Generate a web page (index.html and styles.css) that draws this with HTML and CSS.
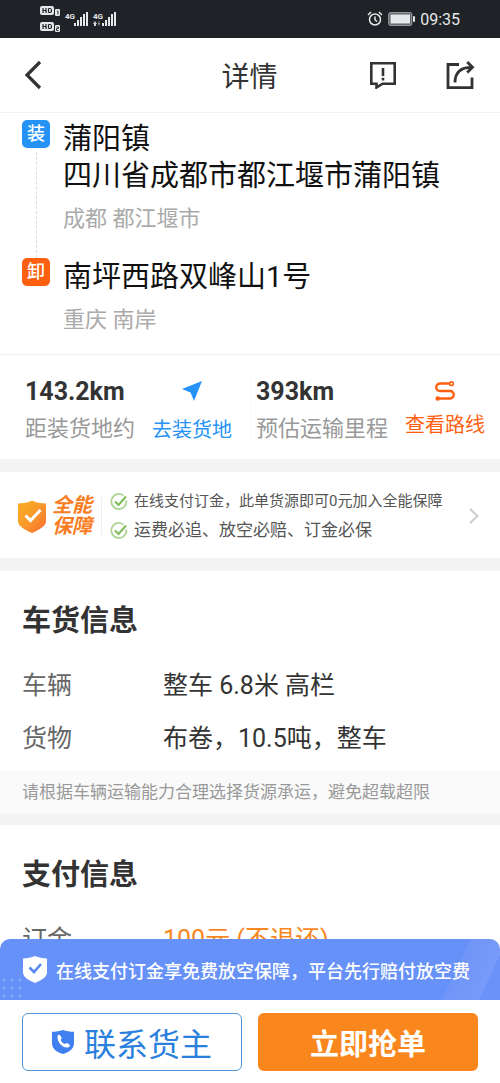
FILE: index.html
```html
<!DOCTYPE html>
<html lang="zh-CN">
<head>
<meta charset="utf-8">
<meta name="viewport" content="width=device-width, initial-scale=1">
<title>详情</title>
<link rel="stylesheet" href="styles.css">
</head>
<body>
<div class="app">
  <div class="status">
    <svg class="status-left" width="80" height="28" viewBox="0 0 80 28" aria-hidden="true">
      <g fill="#e6e7e8">
        <rect x="0" y="1" width="14" height="9" rx="2"/>
        <rect x="0" y="17" width="14" height="9" rx="2"/>
        <rect x="15" y="4" width="5" height="7" rx="1"/>
        <rect x="15" y="20" width="5" height="7" rx="1"/>
        <rect x="34" y="18" width="2" height="3"/><rect x="37" y="15" width="2" height="6"/><rect x="40" y="12" width="2" height="9"/><rect x="43" y="9" width="2" height="12"/><rect x="46" y="7" width="2" height="14"/>
        <rect x="62" y="18" width="2" height="3"/><rect x="65" y="15" width="2" height="6"/><rect x="68" y="12" width="2" height="9"/><rect x="71" y="9" width="2" height="12"/><rect x="74" y="7" width="2" height="14"/>
        <path d="M55 16l2 3h-1v2h-2v-2h-1z" opacity=".9"/><path d="M59 21l-1.500-3h1v-2h1v2h1z" opacity=".5"/>
      </g>
      <path d="M3 3v5M3 5.500h3M6 3v5M8.500 3.500v4M8.500 3.500h1.500q1.500 0 1.500 2t-1.500 2h-1.500M3 19v5M3 21.500h3M6 19v5M8.500 19.500v4M8.500 19.500h1.500q1.500 0 1.500 2t-1.500 2h-1.500" fill="none" stroke="#1f2327" stroke-width="1.200"/>
      <path d="M17 6h1v3.500M16.500 22h2v1.500h-2v2h2" fill="none" stroke="#1f2327" stroke-width=".9"/>
      <text class="net" x="25" y="14">4G</text>
      <text class="net" x="53" y="14">4G</text>
    </svg>
    <div class="status-right">
      <svg width="16" height="16" viewBox="0 0 16 16" fill="none" stroke="#e6e7e8" stroke-width="1.500" aria-hidden="true"><circle cx="8" cy="8.500" r="5.500"/><path d="M8 5.500v3.200l2 1.800M1 4l3-3M15 4l-3-3"/></svg>
      <svg width="27" height="14" viewBox="0 0 27 14" aria-hidden="true"><rect x=".7" y=".7" width="23" height="12.600" rx="2" fill="#5d6063" stroke="#95979a" stroke-width="1.200"/><rect x="2.500" y="2.500" width="19.500" height="9" fill="#e6e7e8"/><rect x="25" y="4" width="2" height="6" rx="1" fill="#e6e7e8"/></svg>
      <span>09:35</span>
    </div>
  </div>

  <header class="header">
    <button class="icon-btn" aria-label="返回"><svg width="18" height="30" viewBox="0 0 18 30" fill="none" stroke="#333" stroke-width="3.200"><path d="M16 2L3 15l13 13"/></svg></button>
    <h1 class="title">详情</h1>
    <div class="header-actions">
      <button class="icon-btn" aria-label="投诉"><svg width="28" height="28" viewBox="0 0 28 28" fill="none" stroke="#333" stroke-width="2.600"><path d="M2.300 2.300h23.400v20.400H13.500L7.500 26.500v-3.800H2.300z"/><path d="M14 7v8M14 16.800v2.600"/></svg></button>
      <button class="icon-btn" aria-label="分享"><svg width="30" height="30" viewBox="0 0 30 30" fill="none" stroke="#333" stroke-width="2.800"><path d="M14 4.500H3v23.200h24V17.500"/><path d="M10 22.500C10 12 15.500 7.300 26.500 7.300M22.200 2l5.300 5.300-5.300 5.300"/></svg></button>
    </div>
  </header>

  <main class="content">
    <section class="route">
      <div class="stop">
        <div class="rail"><span class="tag tag-load">装</span><span class="dash"></span></div>
        <div class="place"><p class="address">蒲阳镇<br>四川省成都市都江堰市蒲阳镇</p><p class="region">成都 都江堰市</p></div>
      </div>
      <div class="stop">
        <div class="rail"><span class="tag tag-unload">卸</span></div>
        <div class="place"><p class="address">南坪西路双峰山1号</p><p class="region">重庆 南岸</p></div>
      </div>
    </section>

    <section class="distances">
      <div class="distance">
        <div class="measure"><strong>143.2km</strong><span>距装货地约</span></div>
        <a class="go go-load" href="#load"><svg width="20" height="20" viewBox="0 0 20 20" aria-hidden="true"><path d="M20 0L12 20l-3.500-8.500L0 8z" fill="#2593f5"/></svg>去装货地</a>
      </div>
      <div class="distance">
        <div class="measure"><strong>393km</strong><span>预估运输里程</span></div>
        <a class="go go-route" href="#route"><svg width="20" height="20" viewBox="0 0 20 20" fill="none" stroke="#ff6010" stroke-width="2.400" aria-hidden="true"><path d="M14.500 2.500H5a3.500 3.500 0 0 0 0 7.500h10a3.500 3.500 0 0 1 0 7.500H4"/><circle cx="16.500" cy="2.700" r="1.800" stroke-width="1.600"/><circle cx="2.700" cy="17.500" r="2.300" fill="#ff6010" stroke="none"/></svg>查看路线</a>
      </div>
    </section>

    <a class="guarantee" href="#guarantee">
      <svg width="28" height="33" viewBox="0 0 28 33" aria-hidden="true"><defs><linearGradient id="gold" x1="0" y1="0" x2="1" y2="1"><stop offset="0" stop-color="#f7ae22"/><stop offset=".5" stop-color="#f99a2b"/><stop offset="1" stop-color="#fb6a30"/></linearGradient></defs><path d="M14 .5C18 2.800 23 3.500 28 3.500V21c0 5-6 8.500-14 12C6 29.500 0 26 0 21V3.500C5 3.500 10 2.800 14 .5z" fill="url(#gold)"/><path d="M7.500 15.500l5 5 10-10.500" fill="none" stroke="#fff" stroke-width="3"/></svg>
      <span class="brand"><span>全能</span><span>保障</span></span>
      <span class="perks">
        <span class="perk"><svg width="18" height="18" viewBox="0 0 18 18" fill="none" aria-hidden="true"><path d="M13.500 2.600A7.500 7.500 0 1 0 16.300 7.500" stroke="#add594" stroke-width="1.800"/><path d="M5 8.500l3.500 3.500 7.500-8.500" stroke="#7dbb56" stroke-width="2"/></svg><span>在线支付订金，此单货源即可0元加入全能保障</span></span>
        <span class="perk perk-short"><svg width="18" height="18" viewBox="0 0 18 18" fill="none" aria-hidden="true"><path d="M13.500 2.600A7.500 7.500 0 1 0 16.300 7.500" stroke="#add594" stroke-width="1.800"/><path d="M5 8.500l3.500 3.500 7.500-8.500" stroke="#7dbb56" stroke-width="2"/></svg><span>运费必追、放空必赔、订金必保</span></span>
      </span>
      <svg class="more" width="10" height="16" viewBox="0 0 10 16" fill="none" stroke="#ccc" stroke-width="2" aria-hidden="true"><path d="M1 1l7.500 7L1 15"/></svg>
    </a>

    <section class="info">
      <h2>车货信息</h2>
      <dl>
        <div class="row"><dt>车辆</dt><dd>整车 6.8米 高栏</dd></div>
        <div class="row"><dt>货物</dt><dd>布卷，10.5吨，整车</dd></div>
      </dl>
      <p class="note">请根据车辆运输能力合理选择货源承运，避免超载超限</p>
    </section>

    <section class="info">
      <h2>支付信息</h2>
      <dl>
        <div class="row"><dt>订金</dt><dd class="price">100元 (不退还)</dd></div>
      </dl>
    </section>
  </main>

  <footer class="footer">
    <div class="promise">
      <svg width="24" height="27" viewBox="0 0 24 27" aria-hidden="true"><path d="M12 0c3.500 1.500 7.500 2.500 12 2.500V16c0 5-5 8-12 11C5 24 0 21 0 16V2.500C4.500 2.500 8.500 1.500 12 0z" fill="#fff"/><path d="M6.500 11.500l4.500 4.500 7-8" fill="none" stroke="#5c88f5" stroke-width="2.600"/></svg>
      <span>在线支付订金享免费放空保障，平台先行赔付放空费</span>
    </div>
    <div class="actions">
      <button class="btn btn-contact"><svg width="22" height="24" viewBox="0 0 22 24" aria-hidden="true"><path d="M11 0c3.500 1.200 7 1.800 11 1.800V13c0 6-4.500 9-11 11C4.500 22 0 19 0 13V1.800C4 1.800 7.500 1.200 11 0z" fill="#3f80ee"/><path d="M5.500 6.500C5.500 5 7 4.300 8 5.200l1.700 2.300c.5.800-.9 1.800-.9 2.500.4 1.700 2 3.400 3.900 3.900.9.100 1.500-1.400 2.400-.9l2.300 1.500c1 .8.300 2.800-1.400 3C11 18.300 5 12.500 5.500 6.500z" fill="#fff"/></svg>联系货主</button>
      <button class="btn btn-grab">立即抢单</button>
    </div>
  </footer>
</div>
</body>
</html>
```
FILE: styles.css
```css
* { box-sizing: border-box; }

body, h1, h2, p, dl, dd { margin: 0; }

body {
  font-family: Roboto, "Noto Sans CJK SC", sans-serif;
  color: #333;
  background: #fff;
}

a { color: inherit; text-decoration: none; }

button { font-family: inherit; cursor: pointer; }

svg { display: block; flex: none; }

.app {
  display: flex;
  flex-direction: column;
  height: 100vh;
}

/* status bar */
.status {
  display: flex;
  flex: none;
  justify-content: space-between;
  align-items: center;
  height: 38px;
  padding: 0 40px;
  background: #1f2327;
}

.net { font-size: 8px; font-weight: 700; fill: #e6e7e8; }

.status-right {
  display: flex;
  align-items: center;
  gap: 5px;
  color: #e6e7e8;
  font-size: 16px;
}

/* title bar */
.header {
  display: grid;
  grid-template-columns: 1fr auto 1fr;
  align-items: center;
  flex: none;
  height: 75px;
  padding: 0 25px 0 24px;
  border-bottom: 1px solid #f2f2f2;
}

.title {
  padding-top: 6px;
  font-size: 28px;
  font-weight: 400;
  line-height: 40px;
}

.icon-btn { padding: 0; border: 0; background: none; }

.header-actions {
  display: flex;
  justify-content: flex-end;
  align-items: center;
  gap: 48px;
}

.content {
  flex: 1;
  min-height: 0;
  overflow-y: auto;
  scrollbar-width: none;
  background: #f4f4f4;
}

/* loading and unloading stops */
.route {
  padding: 7px 22px 16px;
  border-bottom: 1px solid #f2f2f2;
  background: #fff;
}

.stop { display: flex; gap: 13px; }

.rail {
  display: flex;
  flex-direction: column;
  align-items: center;
  gap: 4px;
}

.tag {
  width: 28px;
  height: 28px;
  border-radius: 5px;
  color: #fff;
  font-size: 18px;
  font-weight: 500;
  line-height: 28px;
  text-align: center;
}

.tag-load { background: #2593f5; }
.tag-unload { background: #ff6010; }

.dash { flex: 1; border-left: 1px dashed #ddd; }

.place { padding: 1px 0 21px; }

.stop:last-child .place { padding-bottom: 0; }

.address { color: #111; font-size: 29px; line-height: 37px; }

.region {
  padding-top: 5px;
  color: #aaa;
  font-size: 22px;
  line-height: 37px;
}

/* distances */
.distances {
  display: grid;
  grid-template-columns: 1fr 1fr;
  padding: 15px 0;
  background: #fff;
}

.distance {
  display: flex;
  gap: 17px;
  padding-left: 25px;
  white-space: nowrap;
}

.distance + .distance { padding-left: 5px; border-left: 1px solid #fafafa; }

.measure { display: flex; flex-direction: column; }

.measure strong { font-size: 25px; line-height: 44px; }

.measure span { color: #999; font-size: 22px; line-height: 30px; }

.go {
  display: flex;
  flex-direction: column;
  align-items: center;
  padding-top: 11px;
  gap: 15px;
  font-size: 20px;
  line-height: 28px;
}

.go-load { color: #2593f5; }
.go-route { gap: 10px; color: #ff6010; }

/* guarantee strip */
.guarantee {
  display: flex;
  align-items: center;
  margin: 13px 0;
  padding: 15px 21px 13px 18px;
  background: #fff;
}

.brand {
  display: flex;
  flex-direction: column;
  margin: 0 9px 0 6px;
  color: #fa7d22;
  font-size: 20px;
  font-style: italic;
  font-weight: 700;
  line-height: 21px;
}

.perks {
  display: flex;
  flex-direction: column;
  padding-left: 9px;
  background: linear-gradient(#eee, #eee) 0 50% / 1px 38px no-repeat;
}

.perk {
  display: flex;
  align-items: center;
  gap: 6px;
  color: #555;
  font-size: 15px;
  line-height: 29px;
  white-space: nowrap;
}

.perk-short { font-size: 17px; }

.more { margin-left: auto; }

/* information sections */
.info { margin-bottom: 12px; background: #fff; }

.info h2 {
  padding: 29px 22px 17px;
  font-size: 29px;
  font-weight: 700;
  line-height: 42px;
}

.row {
  display: flex;
  padding: 0 22px;
  font-size: 25px;
  line-height: 53px;
}

.row dt { width: 141px; color: #666; }

.price { color: #fa871e; }

.note {
  margin-top: 6px;
  padding: 0 22px;
  background: #fafafa;
  color: #999;
  font-size: 17px;
  line-height: 42px;
}

/* bottom bar */
.footer { flex: none; background: #fff; }

.promise {
  position: relative;
  display: flex;
  align-items: center;
  gap: 9px;
  height: 61px;
  padding: 0 23px;
  border-radius: 10px 10px 0 0;
  background:
    linear-gradient(115deg, transparent 89%, #6f95f8 89%, #789bf9 96%, #6b92f8 96%),
    #6691f8;
  color: #fff;
  font-size: 18px;
  font-weight: 500;
  white-space: nowrap;
}

/* dotted texture in the corner */
.promise::before {
  content: "";
  position: absolute;
  left: 0;
  bottom: 0;
  width: 24px;
  height: 24px;
  background: radial-gradient(circle, #82a4fa 1px, transparent 2px) 0 0 / 8px 8px;
}

.promise svg { position: relative; }

.actions {
  display: grid;
  grid-template-columns: 1fr 1fr;
  gap: 16px;
  padding: 13px 22px 12px;
}

.btn {
  display: flex;
  justify-content: center;
  align-items: center;
  gap: 10px;
  height: 58px;
  border: 0;
  border-radius: 6px;
}

.btn-contact {
  border: 1px solid #4f93d8;
  background: #fff;
  color: #2a80dc;
  font-size: 32px;
}

.btn-grab {
  background: #fa871e;
  color: #fff;
  font-size: 29px;
  font-weight: 700;
}
```
